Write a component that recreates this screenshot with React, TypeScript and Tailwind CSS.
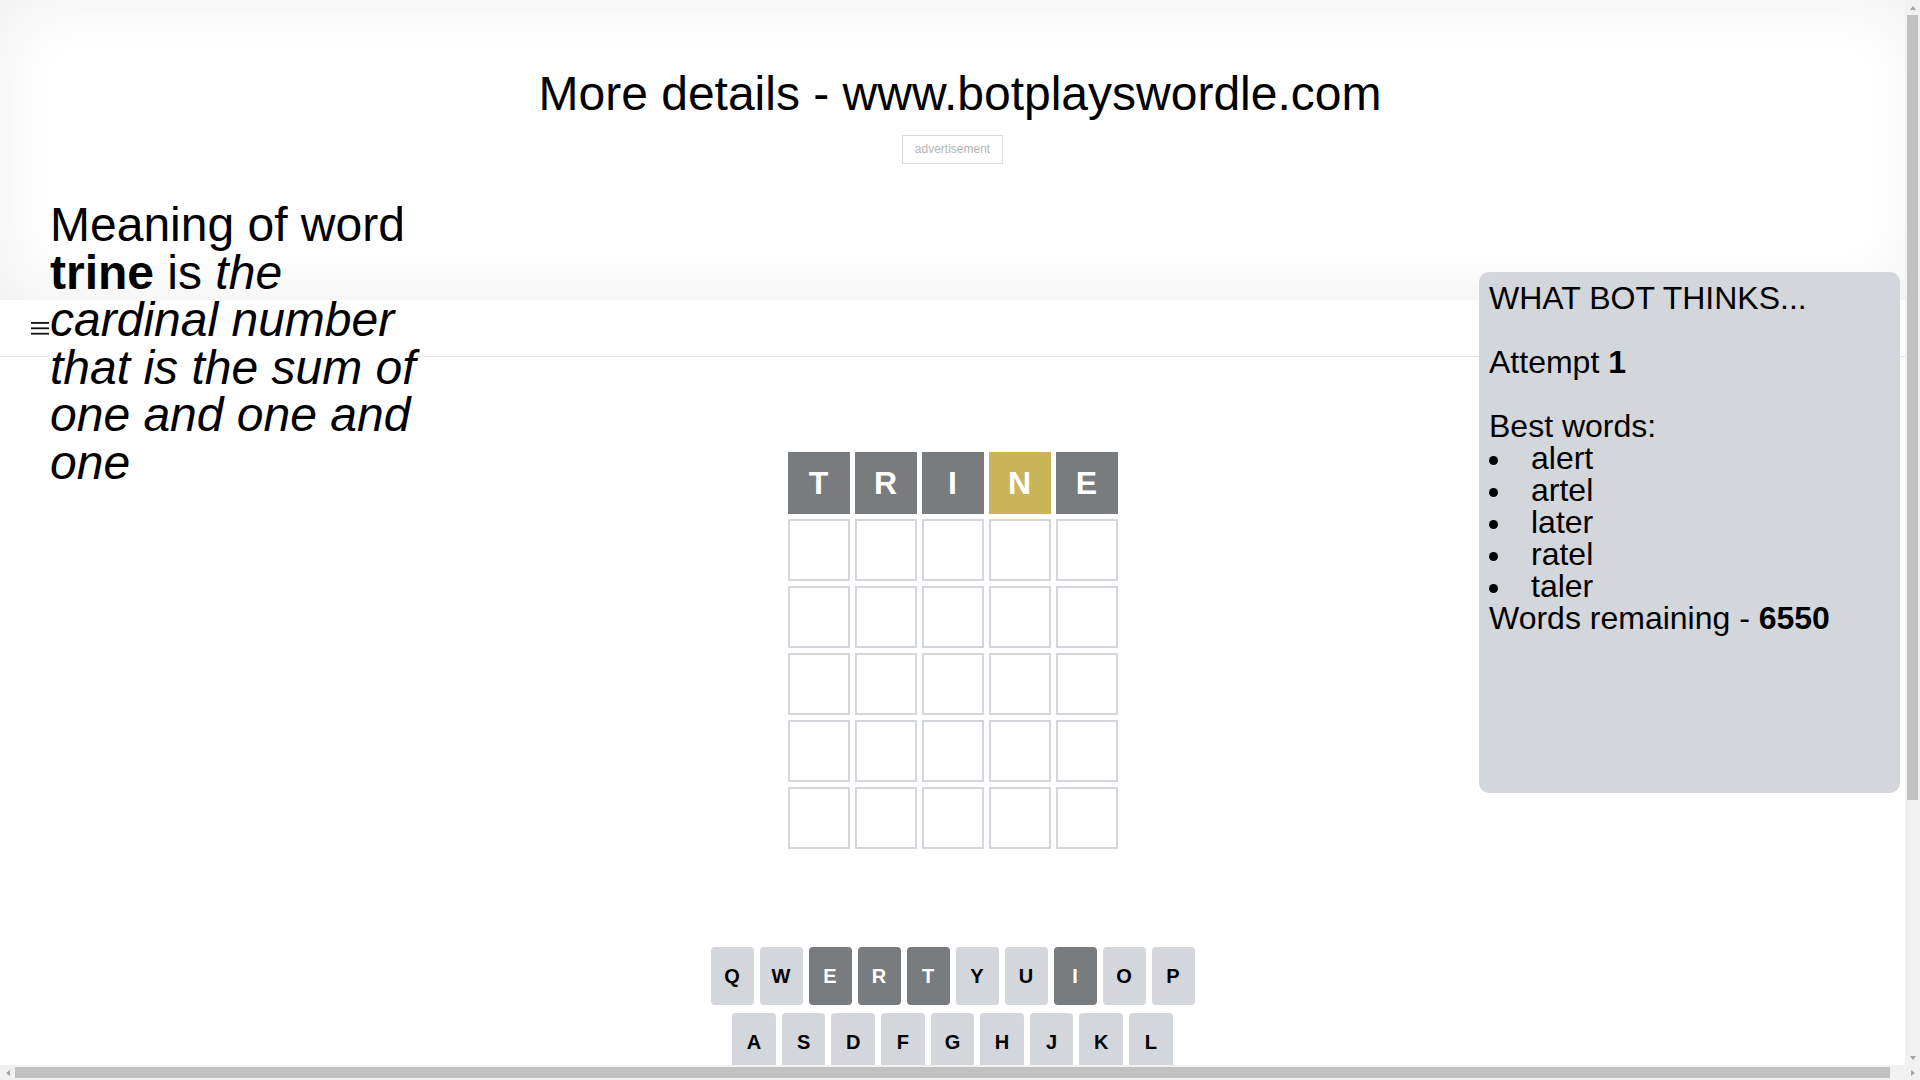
import React from "react";

const guess = [
  { l: "T", c: "bg-[#787c7e]" },
  { l: "R", c: "bg-[#787c7e]" },
  { l: "I", c: "bg-[#787c7e]" },
  { l: "N", c: "bg-[#c9b458]" },
  { l: "E", c: "bg-[#787c7e]" },
];

const dark = new Set(["E", "R", "T", "I"]);

function Key({ k, last, flex }: { k: string; last?: boolean; flex?: string }) {
  const isDark = dark.has(k);
  const isYellow = k === "N";
  const color = isDark
    ? "bg-[#787c7e] text-white"
    : isYellow
    ? "bg-[#c9b458] text-white"
    : "bg-[#d3d6da] text-black";
  return (
    <div
      className={`${flex ?? "flex-1"} ${last ? "" : "mr-[6px]"} flex h-[58px] items-center justify-center rounded-[4px] text-[20px] font-bold uppercase ${color}`}
    >
      {k}
    </div>
  );
}

function Arrow({ dir }: { dir: "up" | "down" | "left" | "right" }) {
  const pts =
    dir === "up"
      ? "4,1 7,5 1,5"
      : dir === "down"
      ? "1,1 7,1 4,5"
      : dir === "left"
      ? "5,1 5,7 1,4"
      : "1,1 1,7 5,4";
  const w = dir === "up" || dir === "down" ? 8 : 6;
  const h = dir === "up" || dir === "down" ? 6 : 8;
  return (
    <svg width={w} height={h} viewBox={`0 0 ${w} ${h}`} aria-hidden="true">
      <polygon points={pts} fill="#a3a3a3" />
    </svg>
  );
}

export default function App() {
  const words = ["alert", "artel", "later", "ratel", "taler"];
  return (
    <div className="relative h-[1080px] w-[1920px] overflow-hidden bg-white font-['Liberation_Sans',Arial,sans-serif] text-black">
      {/* viewport */}
      <div className="relative h-[1065px] w-[1905px] overflow-hidden">
        {/* top ad block */}
        <div className="pointer-events-none relative z-20 h-[300px] w-[1920px] shadow-[inset_0_0_70px_rgba(0,0,0,0.07)]">
          <h1 className="pt-[66px] text-center text-[48px] font-normal leading-[55px]">
            More details - www.botplayswordle.com
          </h1>
          <div className="mt-[14px] flex w-[1905px] justify-center">
            <div className="border border-[#dcdcdc] px-[12px] py-[6px] text-[12px] leading-[15px] text-[#b4b4b4]">
              advertisement
            </div>
          </div>
        </div>

        {/* header */}
        <header className="flex h-[57px] items-center border-b border-[#e4e4e4] pl-[31px]">
          <svg width="18" height="13" viewBox="0 0 18 13" aria-hidden="true">
            <rect x="0" y="0" width="18" height="1.8" fill="#111" />
            <rect x="0" y="5.4" width="18" height="1.8" fill="#111" />
            <rect x="0" y="10.8" width="18" height="1.8" fill="#111" />
          </svg>
        </header>

        {/* board */}
        <div className="mx-auto mt-[95px] flex w-[330px] flex-col gap-[5px]">
          <div className="flex gap-[5px]">
            {guess.map((g, i) => (
              <div
                key={i}
                className={`flex h-[62px] w-[62px] items-center justify-center text-[32px] font-bold text-white ${g.c}`}
              >
                {g.l}
              </div>
            ))}
          </div>
          {[0, 1, 2, 3, 4].map((r) => (
            <div key={r} className="flex gap-[5px]">
              {[0, 1, 2, 3, 4].map((c) => (
                <div key={c} className="h-[62px] w-[62px] border-2 border-[#d3d6da]" />
              ))}
            </div>
          ))}
        </div>

        {/* keyboard */}
        <div className="mx-auto mt-[98px] w-[484px]">
          <div className="mb-[8px] flex">
            {"QWERTYUIOP".split("").map((k, i) => (
              <Key key={k} k={k} last={i === 9} />
            ))}
          </div>
          <div className="mb-[8px] flex">
            <div className="flex-[0.5]" />
            {"ASDFGHJKL".split("").map((k, i) => (
              <Key key={k} k={k} last={i === 8} />
            ))}
            <div className="flex-[0.5]" />
          </div>
          <div className="flex">
            <div className="mr-[6px] flex h-[58px] flex-[1.5] items-center justify-center rounded-[4px] bg-[#d3d6da] text-[12px] font-bold">
              ENTER
            </div>
            {"ZXCVBNM".split("").map((k) => (
              <Key key={k} k={k} />
            ))}
            <div className="flex h-[58px] flex-[1.5] items-center justify-center rounded-[4px] bg-[#d3d6da]">
              <svg width="24" height="24" viewBox="0 0 24 24">
                <path
                  fill="#1a1a1b"
                  d="M22 3H7c-.69 0-1.23.35-1.59.88L0 12l5.41 8.11c.36.53.9.89 1.59.89h15c1.1 0 2-.9 2-2V5c0-1.1-.9-2-2-2zm0 16H7.07L2.4 12l4.66-7H22v14zm-11.59-2L14 13.41 17.59 17 19 15.59 15.41 12 19 8.41 17.59 7 14 10.59 10.41 7 9 8.41 12.59 12 9 15.59z"
                />
              </svg>
            </div>
          </div>
        </div>

        {/* meaning overlay */}
        <div className="absolute left-[50px] top-[201px] z-10 w-fit whitespace-nowrap bg-white text-[48px] leading-[47.5px]">
          Meaning of word
          <br />
          <b>trine</b> is <i>the</i>
          <br />
          <i>cardinal number</i>
          <br />
          <i>that is the sum of</i>
          <br />
          <i>one and one and</i>
          <br />
          <i>one</i>
        </div>

        {/* bot panel */}
        <div className="absolute left-[1479px] top-[272px] z-30 h-[521px] w-[421px] rounded-[10px] bg-[#d3d6da] p-[10px] text-[32px] leading-[32px]">
          <div>WHAT BOT THINKS...</div>
          <div className="h-[32px]" />
          <div>
            Attempt <b>1</b>
          </div>
          <div className="h-[32px]" />
          <div>Best words:</div>
          {words.map((w) => (
            <div key={w} className="flex items-start">
              <span className="mt-[14px] h-[9px] w-[9px] shrink-0 rounded-full bg-black" />
              <span className="ml-[33px]">{w}</span>
            </div>
          ))}
          <div>
            Words remaining - <b>6550</b>
          </div>
        </div>
      </div>

      {/* vertical scrollbar */}
      <div className="absolute right-0 top-0 flex h-[1065px] w-[15px] flex-col bg-[#f1f1f1]">
        <div className="flex h-[15px] items-center justify-center">
          <Arrow dir="up" />
        </div>
        <div className="flex-1 px-[2px]">
          <div className="h-[785px] w-full bg-[#c1c1c1]" />
        </div>
        <div className="flex h-[15px] items-center justify-center">
          <Arrow dir="down" />
        </div>
      </div>

      {/* horizontal scrollbar */}
      <div className="absolute bottom-0 left-0 flex h-[15px] w-[1920px] bg-[#f1f1f1]">
        <div className="flex w-[15px] items-center justify-center">
          <Arrow dir="left" />
        </div>
        <div className="flex flex-1 items-center">
          <div className="h-[11px] w-[1875px] bg-[#c1c1c1]" />
        </div>
        <div className="flex w-[15px] items-center justify-center">
          <Arrow dir="right" />
        </div>
      </div>
    </div>
  );
}
